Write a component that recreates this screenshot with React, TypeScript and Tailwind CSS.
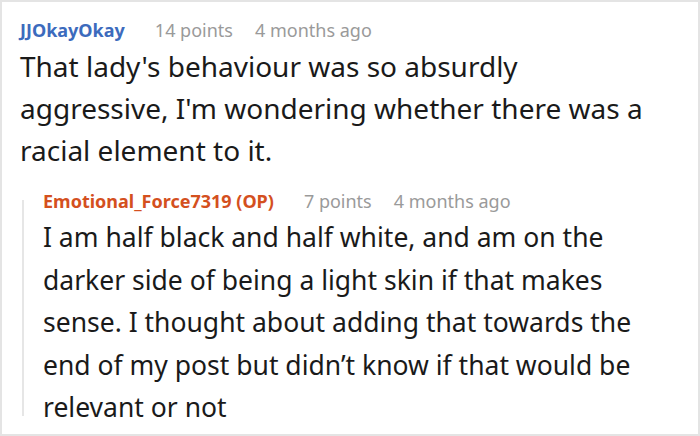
import React from 'react';

interface Comment {
  author: string;
  points: string;
  time: string;
  body: string;
  op?: boolean;
}

const parent: Comment = {
  author: 'JJOkayOkay',
  points: '14 points',
  time: '4 months ago',
  body: "That lady's behaviour was so absurdly aggressive, I'm wondering whether there was a racial element to it.",
};

const reply: Comment = {
  author: 'Emotional_Force7319 (OP)',
  points: '7 points',
  time: '4 months ago',
  body: 'I am half black and half white, and am on the darker side of being a light skin if that makes sense. I thought about adding that towards the end of my post but didn\u2019t know if that would be relevant or not',
  op: true,
};

function CommentHeader({ c }: { c: Comment }) {
  return (
    <div className="flex items-baseline text-[18px] leading-[24px] whitespace-nowrap">
      <span className={`font-bold ${c.op ? 'text-[#d4501e]' : 'text-[#3c6bbd]'}`}>{c.author}</span>
      <span className="ml-[30px] text-[#9a9a9a]">{c.points}</span>
      <span className="ml-[22px] text-[#9a9a9a]">{c.time}</span>
    </div>
  );
}

export default function App() {
  return (
    <div
      className="w-[700px] h-[436px] bg-white border-2 border-[#e4e4e4] overflow-hidden"
      style={{ fontFamily: '"Noto Sans", sans-serif' }}
    >
      <div className="pl-[18px] pt-[16px] pr-[10px]">
        <CommentHeader c={parent} />
        <p className="mt-[3px] text-[28px] leading-[42px] text-[#1a1a1a] w-[640px]">{parent.body}</p>

        <div className="mt-[18px] flex">
          <div className="ml-[2px] mt-[11px] mb-[13px] w-[2px] shrink-0 bg-[#e6e6e6]" />
          <div className="pl-[19px]">
            <CommentHeader c={reply} />
            <p className="mt-[3px] text-[26.5px] leading-[42.5px] text-[#1a1a1a] w-[630px]">{reply.body}</p>
          </div>
        </div>
      </div>
    </div>
  );
}
